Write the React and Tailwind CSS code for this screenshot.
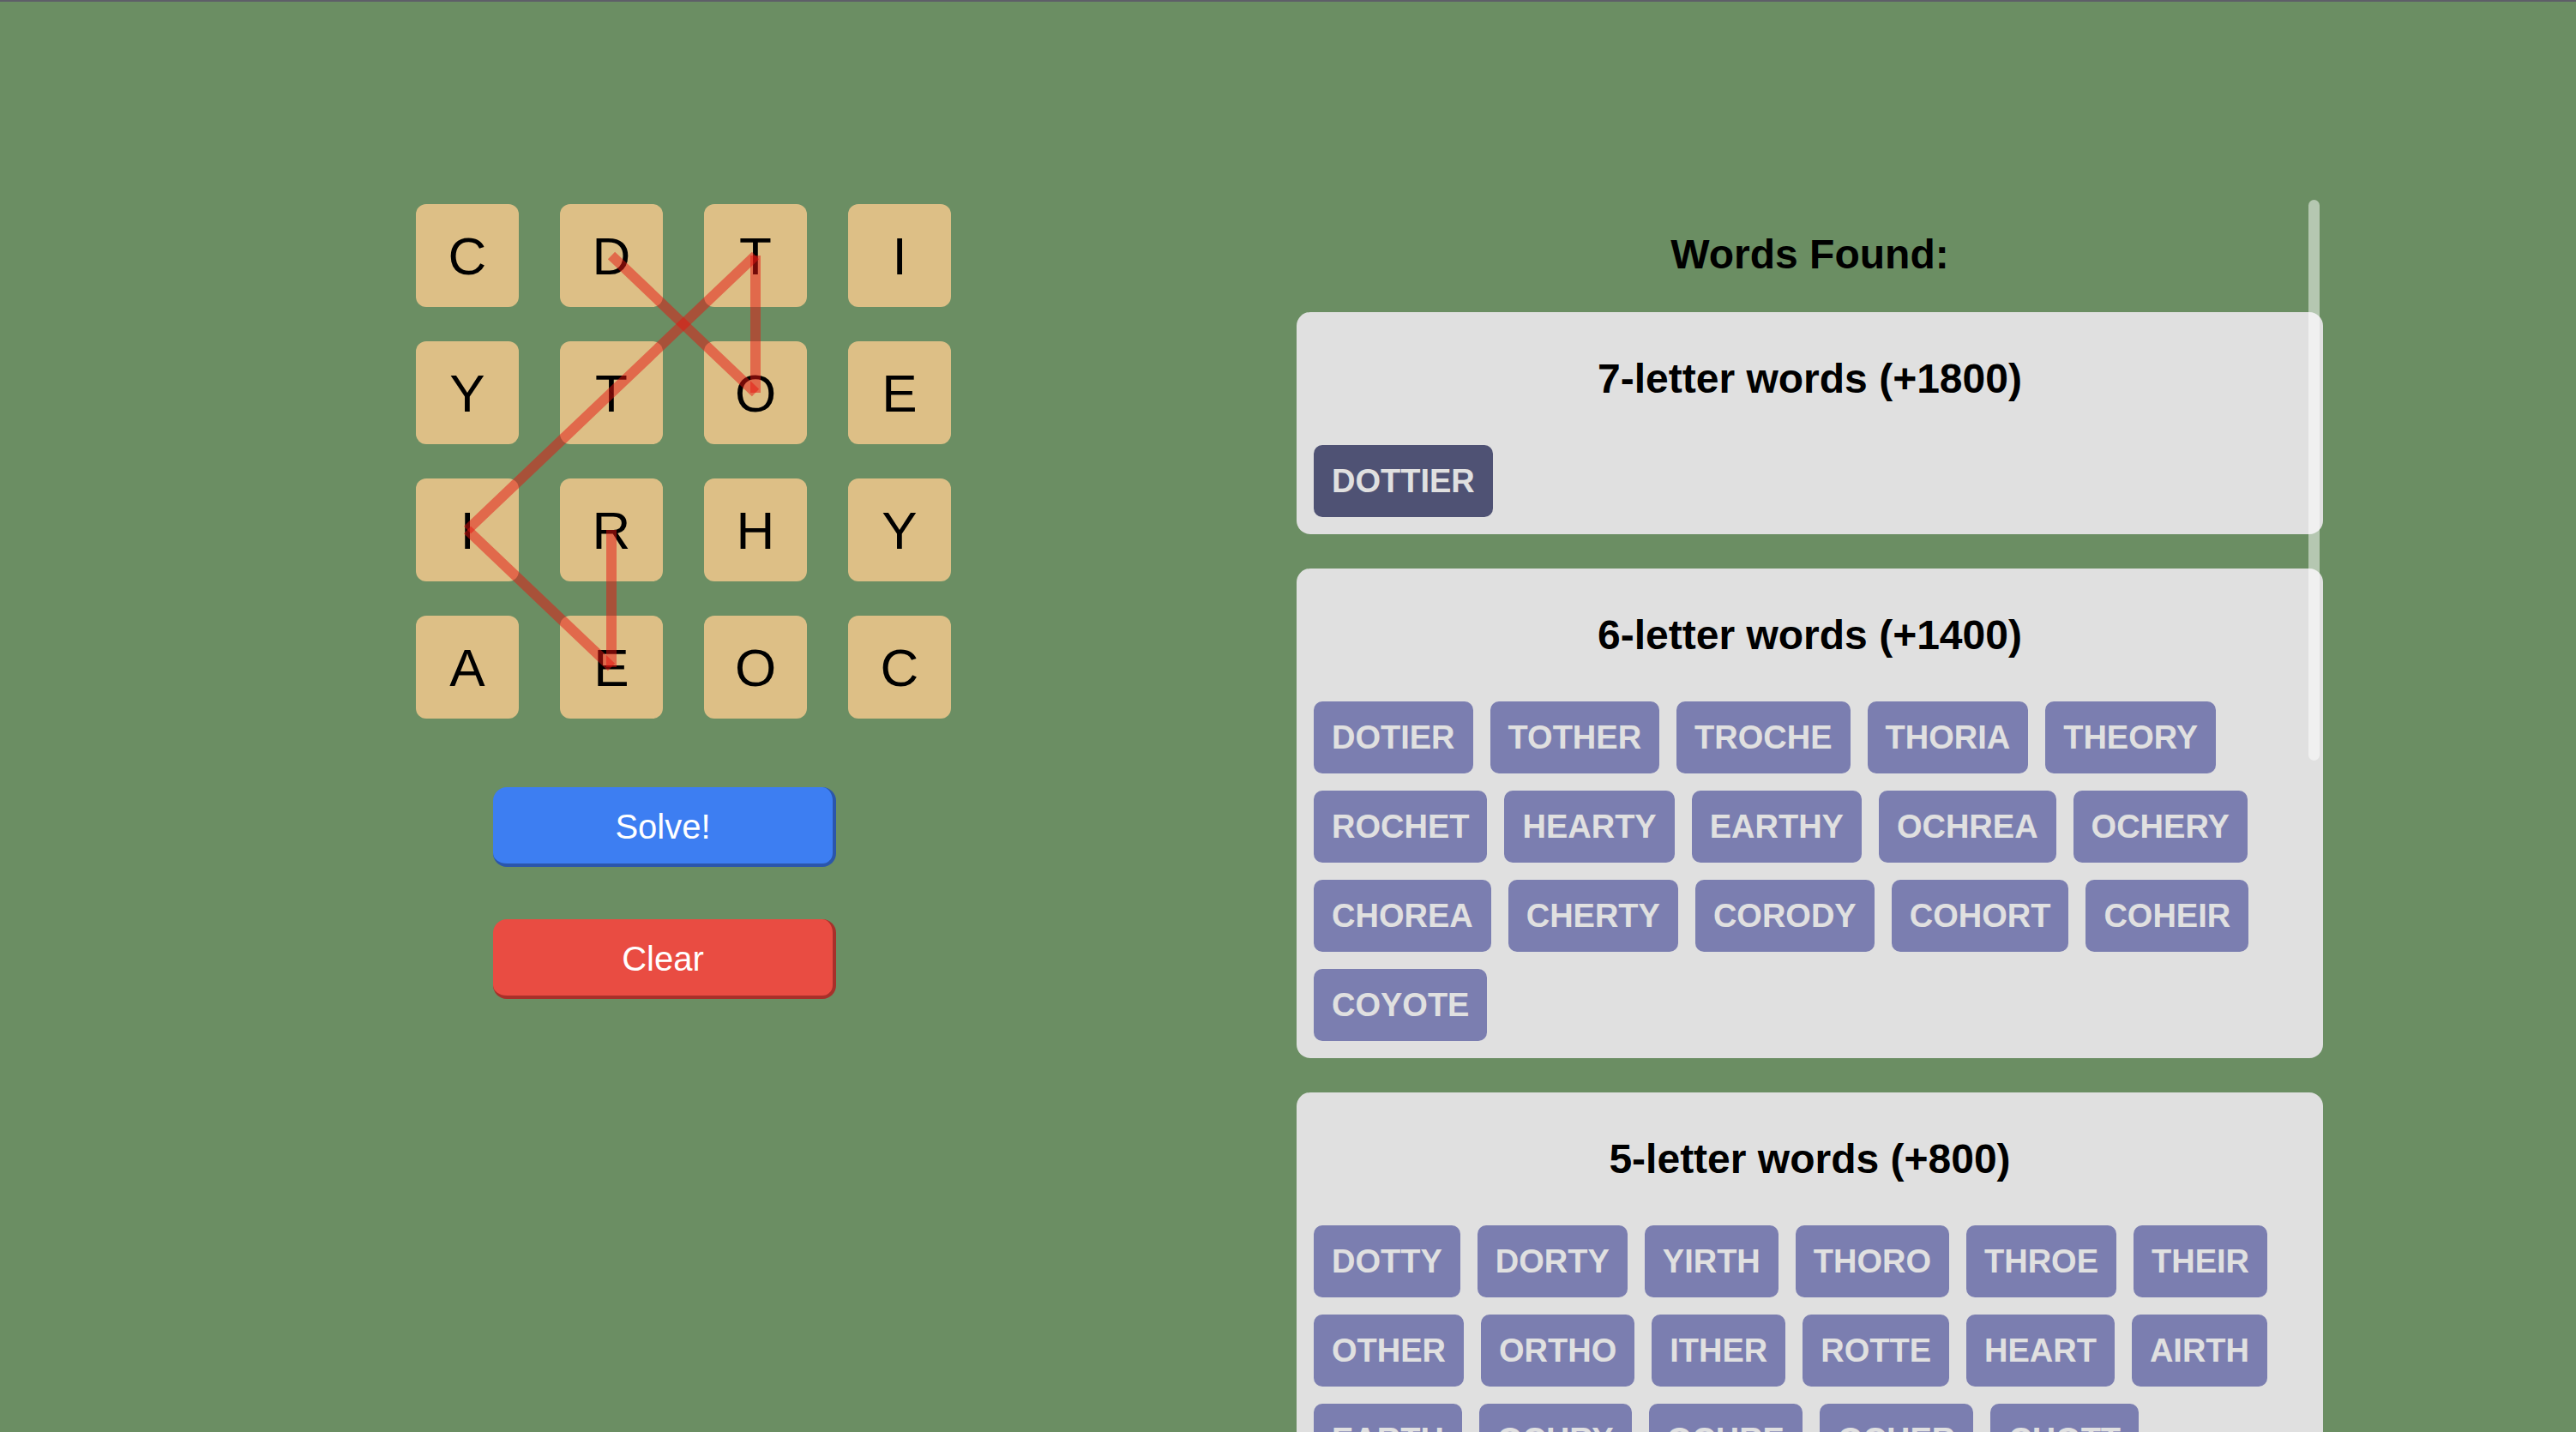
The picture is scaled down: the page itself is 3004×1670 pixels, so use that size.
const GRID = [
  ['C', 'D', 'T', 'I'],
  ['Y', 'T', 'O', 'E'],
  ['I', 'R', 'H', 'Y'],
  ['A', 'E', 'O', 'C'],
];

// selected path: D O T T I E R  (row, col)
const PATH = [
  [0, 1],
  [1, 2],
  [0, 2],
  [1, 1],
  [2, 0],
  [3, 1],
  [2, 1],
];

const GROUPS = [
  { len: 7, points: 1800, words: ['DOTTIER'] },
  {
    len: 6,
    points: 1400,
    words: [
      'DOTIER', 'TOTHER', 'TROCHE', 'THORIA', 'THEORY',
      'ROCHET', 'HEARTY', 'EARTHY', 'OCHREA', 'OCHERY',
      'CHOREA', 'CHERTY', 'CORODY', 'COHORT', 'COHEIR',
      'COYOTE',
    ],
  },
  {
    len: 5,
    points: 800,
    words: [
      'DOTTY', 'DORTY', 'YIRTH', 'THORO', 'THROE', 'THEIR',
      'OTHER', 'ORTHO', 'ITHER', 'ROTTE', 'HEART', 'AIRTH',
      'EARTH', 'OCHRY', 'OCHRE', 'OCHER', 'CHOTT',
    ],
  },
];

const center = ([r, c]) => [60 + c * 168, 60 + r * 160];

const Board = () => {
  const segs = PATH.slice(1).map((p, i) => [center(PATH[i]), center(p)]);
  return (
    <div className="relative w-[624px]">
      <div className="grid grid-cols-4 gap-x-[48px] gap-y-[40px]">
        {GRID.flat().map((ch, i) => (
          <div
            key={i}
            className="w-[120px] h-[120px] rounded-[12px] bg-[#ddbf86] flex items-center justify-center text-[62px] text-black"
          >
            {ch}
          </div>
        ))}
      </div>
      <svg className="absolute left-0 top-0 pointer-events-none" width="624" height="600">
        {segs.map(([a, b], i) => (
          <line
            key={i}
            x1={a[0]}
            y1={a[1]}
            x2={b[0]}
            y2={b[1]}
            stroke="rgba(230,20,15,0.5)"
            strokeWidth="12"
          />
        ))}
      </svg>
    </div>
  );
};

const WordCard = ({ group, first }) => (
  <div className="bg-[#e0e0e0] rounded-[16px] px-5 pt-[50px] pb-5 mb-10">
    <h3 className="text-[48px] leading-[55px] font-bold text-center text-black mb-[50px]">
      {group.len}-letter words (+{group.points})
    </h3>
    <div className="flex flex-wrap gap-5">
      {group.words.map((w, i) => (
        <span
          key={w}
          className={
            'rounded-[10px] px-[21px] py-5 text-[38px] leading-[44px] font-bold text-[#e0e0e0] ' +
            (first && i === 0 ? 'bg-[#4f5274]' : 'bg-[#7b7eb0]')
          }
        >
          {w}
        </span>
      ))}
    </div>
  </div>
);

export default function App() {
  return (
    <div className="h-[1670px] overflow-hidden bg-[#6b8e63] font-['Liberation_Sans',Arial,Helvetica,sans-serif]">
      <div className="h-[2px] bg-[#5e5e68]" />
      <div className="flex">
        <div className="ml-[485px] mt-[236px] w-[624px] shrink-0">
          <Board />
          <div className="ml-[90px] mt-[80px] flex flex-col gap-[61px]">
            <button className="w-[400px] h-[93px] pt-[2px] rounded-[16px] bg-[#3d7ef2] border-r-4 border-b-4 border-[#2b56ab] text-white text-[40px]">
              Solve!
            </button>
            <button className="w-[400px] h-[93px] pt-[2px] rounded-[16px] bg-[#e94c42] border-r-4 border-b-4 border-[#a8302a] text-white text-[40px]">
              Clear
            </button>
          </div>
        </div>
        <div className="relative ml-[403px] mt-[226px] w-[1197px] h-[1442px] overflow-hidden shrink-0">
          <h2 className="mt-[41px] mb-10 text-[48px] leading-[55px] font-bold text-center text-black">
            Words Found:
          </h2>
          {GROUPS.map((g, i) => (
            <WordCard key={g.len} group={g} first={i === 0} />
          ))}
          <div className="absolute right-[4px] top-[5px] w-[13px] h-[654px] rounded-full bg-white/50" />
        </div>
      </div>
    </div>
  );
}
